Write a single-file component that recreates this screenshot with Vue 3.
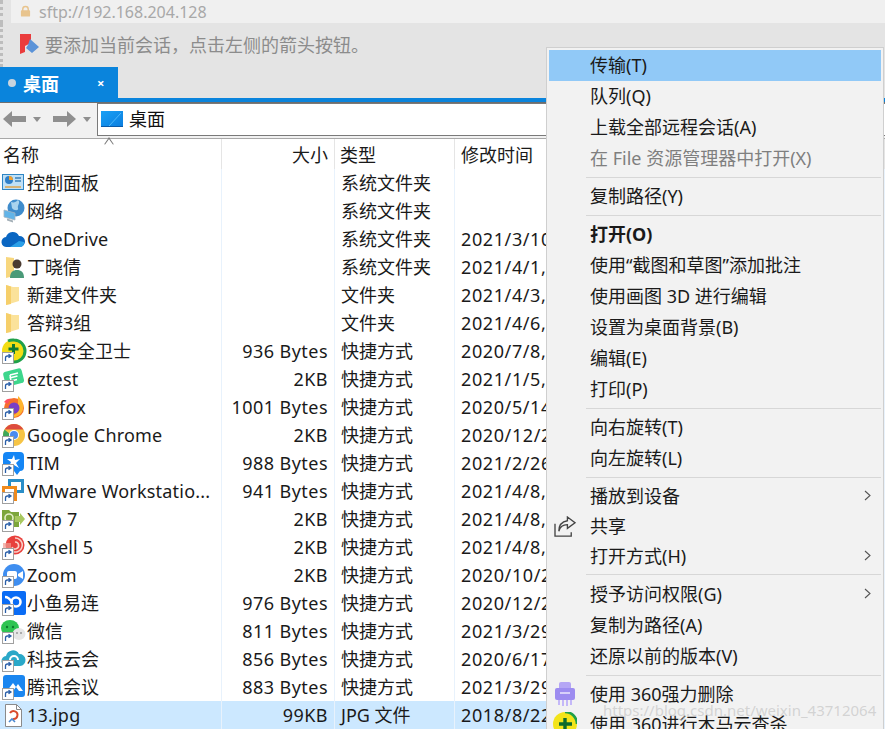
<script setup>
const rows = [
  { icon: 'panel', name: '控制面板', size: '', type: '系统文件夹', date: '' },
  { icon: 'network', name: '网络', size: '', type: '系统文件夹', date: '' },
  { icon: 'onedrive', name: 'OneDrive', size: '', type: '系统文件夹', date: '2021/3/10' },
  { icon: 'user', name: '丁晓倩', size: '', type: '系统文件夹', date: '2021/4/1,' },
  { icon: 'folder', name: '新建文件夹', size: '', type: '文件夹', date: '2021/4/3,' },
  { icon: 'folder', name: '答辩3组', size: '', type: '文件夹', date: '2021/4/6,' },
  { icon: 's360', name: '360安全卫士', size: '936 Bytes', type: '快捷方式', date: '2020/7/8,', link: true },
  { icon: 'eztest', name: 'eztest', size: '2KB', type: '快捷方式', date: '2021/1/5,', link: true },
  { icon: 'firefox', name: 'Firefox', size: '1001 Bytes', type: '快捷方式', date: '2020/5/14', link: true },
  { icon: 'chrome', name: 'Google Chrome', size: '2KB', type: '快捷方式', date: '2020/12/2', link: true },
  { icon: 'tim', name: 'TIM', size: '988 Bytes', type: '快捷方式', date: '2021/2/26', link: true },
  { icon: 'vmware', name: 'VMware Workstatio...', size: '941 Bytes', type: '快捷方式', date: '2021/4/8,', link: true },
  { icon: 'xftp', name: 'Xftp 7', size: '2KB', type: '快捷方式', date: '2021/4/8,', link: true },
  { icon: 'xshell', name: 'Xshell 5', size: '2KB', type: '快捷方式', date: '2021/4/8,', link: true },
  { icon: 'zoom', name: 'Zoom', size: '2KB', type: '快捷方式', date: '2020/10/2', link: true },
  { icon: 'fish', name: '小鱼易连', size: '976 Bytes', type: '快捷方式', date: '2020/12/2', link: true },
  { icon: 'wechat', name: '微信', size: '811 Bytes', type: '快捷方式', date: '2021/3/29', link: true },
  { icon: 'cloud', name: '科技云会', size: '856 Bytes', type: '快捷方式', date: '2020/6/17', link: true },
  { icon: 'meeting', name: '腾讯会议', size: '883 Bytes', type: '快捷方式', date: '2021/3/29', link: true },
  { icon: 'jpg', name: '13.jpg', size: '99KB', type: 'JPG 文件', date: '2018/8/22', selected: true }
]

const menu = [
  { label: '传输(T)', active: true },
  { label: '队列(Q)' },
  { label: '上载全部远程会话(A)' },
  { label: '在 File 资源管理器中打开(X)', disabled: true },
  { sep: true },
  { label: '复制路径(Y)' },
  { sep: true },
  { label: '打开(O)', bold: true },
  { label: '使用“截图和草图”添加批注' },
  { label: '使用画图 3D 进行编辑' },
  { label: '设置为桌面背景(B)' },
  { label: '编辑(E)' },
  { label: '打印(P)' },
  { sep: true },
  { label: '向右旋转(T)' },
  { label: '向左旋转(L)' },
  { sep: true },
  { label: '播放到设备', sub: true, tight: true },
  { label: '共享', icon: 'share', tight: true },
  { label: '打开方式(H)', sub: true, tight: true },
  { sep: true, wide: true },
  { label: '授予访问权限(G)', sub: true },
  { label: '复制为路径(A)' },
  { label: '还原以前的版本(V)' },
  { sep: true },
  { label: '使用 360强力删除', icon: 'shred', tight: true },
  { label: '使用 360进行木马云查杀', icon: 'scan', tight: true }
]

// latin names run a bit wider than the installed font
const isLatin = (s) => /^[\x00-\x7f]+$/.test(s) || /^\d/.test(s)
</script>

<template>
  <div class="screen">
    <div class="url-bar">
      <div class="url-inner">
        <svg class="lock" width="11" height="13" viewBox="0 0 12 13">
          <path d="M3 6V4a3 3 0 0 1 6 0v2" fill="none" stroke="#e8c48e" stroke-width="1.6" />
          <rect x="1" y="5" width="10" height="7" rx="1" fill="#e8c48e" />
        </svg>
        <span class="url-text">sftp://192.168.204.128</span>
      </div>
    </div>
    <div class="hint-bar">
      <svg width="21" height="20" viewBox="0 0 21 20">
        <path d="M1 0h11v9l-6 3v6l-5 2z" fill="#ea3c3c" />
        <path d="M11 5l9 8-7 6-6-5 2-3z" fill="#5b93d8" />
      </svg>
      <span>要添加当前会话，点击左侧的箭头按钮。</span>
    </div>
    <div class="tab-row">
      <div class="tab">
        <i class="tab-dot"></i>
        <span class="tab-name">桌面</span>
        <span class="tab-close">×</span>
      </div>
    </div>
    <div class="tab-line"></div>
    <div class="toolbar">
      <div class="nav">
        <svg width="23" height="18" viewBox="0 0 23 18"><path d="M9 1v5h14v6H9v5L0 9z" fill="#8f8f8f" /></svg>
        <i class="caret"></i>
        <svg class="nav-fwd" width="23" height="18" viewBox="0 0 23 18"><path d="M14 1v5H0v6h14v5l9-8z" fill="#8f8f8f" /></svg>
        <i class="caret"></i>
      </div>
      <div class="address">
        <svg width="22" height="17" viewBox="0 0 22 17">
          <defs>
            <linearGradient id="desk" x1="0" y1="0" x2="1" y2="1">
              <stop offset="0" stop-color="#1aa0f5" />
              <stop offset="1" stop-color="#0b7fe0" />
            </linearGradient>
          </defs>
          <rect width="22" height="15" fill="url(#desk)" />
          <path d="M8 15L20 2" stroke="#4db8fb" stroke-width="1" />
          <rect y="15" width="22" height="1" fill="#0a5aa8" />
        </svg>
        <span class="address-text">桌面</span>
      </div>
    </div>

    <div class="list-head">
      <div class="col-name">名称<i class="sort"></i></div>
      <div class="col-size">大小</div>
      <div class="col-type">类型</div>
      <div class="col-date">修改时间</div>
    </div>

    <div class="list">
      <div v-for="r in rows" :key="r.name" class="row" :class="{ selected: r.selected }">
        <div class="col-name">
          <svg class="file-icon" width="24" height="24" viewBox="0 0 24 24">
            <template v-if="r.icon === 'panel'">
              <rect x="1.5" y="3.5" width="21" height="15" fill="#bfe0f6" stroke="#2f86c4" />
              <circle cx="8" cy="9" r="4" fill="#2f7fc8" />
              <path d="M8 9V5a4 4 0 0 1 4 4z" fill="#f0a030" />
              <path d="M14 7h6M14 10h6" stroke="#3a7fb8" stroke-width="1.4" />
              <path d="M4 16h16" stroke="#e0a040" stroke-width="1.4" />
            </template>
            <template v-else-if="r.icon === 'network'">
              <circle cx="15" cy="9" r="8.5" fill="#3f8ccc" />
              <path d="M10 3c3 1 5 0 7-2 3 3-1 5 0 8s-4 3-6 0z" fill="#a9d3ee" />
              <path d="M3 11l11 3v7L3 18z" fill="#62b4e8" stroke="#a4b4c0" stroke-width=".8" />
              <path d="M6 19.5l6 2v2l-6-2z" fill="#a4b0b8" />
            </template>
            <template v-else-if="r.icon === 'onedrive'">
              <path d="M6 20a5 5 0 0 1-1-10 7 7 0 0 1 13-1 5.5 5.5 0 0 1 1 11z" fill="#0a66c2" />
              <path d="M9 20l9-6 5 1a4 4 0 0 1-4 5z" fill="#2ba0e8" />
            </template>
            <template v-else-if="r.icon === 'user'">
              <path d="M5 2l8 1v18l-8 2z" fill="#f8d77e" />
              <circle cx="16" cy="9" r="4.5" fill="#4a3a30" />
              <path d="M9 23c0-6 3-8 7-8s7 2 7 8z" fill="#4a9a78" />
            </template>
            <template v-else-if="r.icon === 'folder'">
              <path d="M5 2l7 2h6v14l-13 4z" fill="#fbe29a" />
              <path d="M5 2l5 1.5V21l-5 1z" fill="#f6cf6a" />
            </template>
            <template v-else-if="r.icon === 's360'">
              <circle cx="12.5" cy="12" r="11.5" fill="#f3dd14" />
              <path d="M7 2a11 11 0 0 1 6-1 11 11 0 0 1 0 22" fill="none" stroke="#1fa04a" stroke-width="3" />
              <path d="M12.5 5v10M7.5 10h10" stroke="#0e7a34" stroke-width="3" />
            </template>
            <template v-else-if="r.icon === 'eztest'">
              <rect x="3" y="3" width="19" height="15" rx="3" transform="rotate(-14 12 10)" fill="#3dd68c" />
              <path d="M9 8l8-2M8.5 11l8-2M9 8l1 6 6-1.5" fill="none" stroke="#fff" stroke-width="1.5" />
            </template>
            <template v-else-if="r.icon === 'firefox'">
              <circle cx="13" cy="13" r="10" fill="#f5702a" />
              <path d="M17 1c5 4 7 11 4 16-3 5-9 6-13 4 7 0 10-5 9-10z" fill="#ffb52e" />
              <circle cx="13" cy="13" r="5.5" fill="#7a3fc4" />
              <path d="M3 7c2-3 5-4 7-3-1 2-3 3-3 5z" fill="#ff4f5e" />
            </template>
            <template v-else-if="r.icon === 'chrome'">
              <circle cx="13" cy="12" r="11" fill="#f6c445" />
              <path d="M3.5 6.5A11 11 0 0 1 22.5 6.5H13z" fill="#dd4b3e" />
              <path d="M3.5 6.5A11 11 0 0 0 10 22.5l4-7z" fill="#3da85a" />
              <circle cx="13" cy="12" r="5" fill="#fff" />
              <circle cx="13" cy="12" r="4" fill="#4a8af0" />
            </template>
            <template v-else-if="r.icon === 'tim'">
              <path d="M6 1h13a4 4 0 0 1 4 4v11a4 4 0 0 1-4 4l-3 4-3-4H6a4 4 0 0 1-4-4V5a4 4 0 0 1 4-4z" fill="#1486f5" />
              <path d="M13 4l1 5 5-1-4 4 3 5-5-3-5 2 2-5-4-3 5 0z" fill="#fff" />
            </template>
            <template v-else-if="r.icon === 'vmware'">
              <rect x="7" y="0" width="16" height="14" fill="#2a8ec8" />
              <rect x="10" y="3" width="10" height="8" fill="#fff" />
              <rect x="1" y="7" width="15" height="15" fill="#f08a1c" />
              <rect x="4" y="10" width="9" height="9" fill="#fff" />
            </template>
            <template v-else-if="r.icon === 'xftp'">
              <path d="M1 3h7l2 2h8v15H1z" fill="#7da63c" />
              <path d="M14 9h5v-3l5 6-5 6v-3h-5z" fill="#a8c860" />
              <circle cx="8" cy="11" r="4" fill="none" stroke="#e4efc8" stroke-width="1.6" />
            </template>
            <template v-else-if="r.icon === 'xshell'">
              <circle cx="14" cy="10" r="9.5" fill="#e8403c" />
              <path d="M14 3a7 7 0 1 1-6 10M14 7a3.5 3.5 0 1 1-3 5" fill="none" stroke="#f8d0c8" stroke-width="1.6" />
              <path d="M2 8h8v8H2z" fill="#f09a90" opacity=".7" />
            </template>
            <template v-else-if="r.icon === 'zoom'">
              <circle cx="13" cy="12" r="11" fill="#3f8ef0" />
              <rect x="6" y="8" width="10" height="8" rx="2" fill="#fff" />
              <path d="M17 11l5-3v8l-5-3z" fill="#fff" />
            </template>
            <template v-else-if="r.icon === 'fish'">
              <rect x="1" y="0" width="24" height="24" rx="2" fill="#0a6cf5" />
              <circle cx="15" cy="11" r="4.5" fill="none" stroke="#fff" stroke-width="2.6" />
              <path d="M4 6c3 0 5 2 7 5" fill="none" stroke="#fff" stroke-width="2.6" />
            </template>
            <template v-else-if="r.icon === 'wechat'">
              <ellipse cx="9" cy="9" rx="9" ry="8" fill="#2fc452" />
              <circle cx="6" cy="8" r="1.2" fill="#0e7a2e" />
              <circle cx="12" cy="8" r="1.2" fill="#0e7a2e" />
              <ellipse cx="18" cy="15" rx="6.5" ry="6" fill="#e6e6e6" />
              <circle cx="16" cy="14" r="1" fill="#999" />
              <circle cx="20" cy="14" r="1" fill="#999" />
            </template>
            <template v-else-if="r.icon === 'cloud'">
              <path d="M6 19a5 5 0 0 1-1-10 7 7 0 0 1 13-2 6 6 0 0 1 1 12z" fill="#2ba8c8" />
              <path d="M9 13a4 4 0 0 1 8 0" fill="none" stroke="#fff" stroke-width="2" />
            </template>
            <template v-else-if="r.icon === 'meeting'">
              <rect x="2" y="0" width="22" height="22" rx="3" fill="#1a86f0" />
              <path d="M6 16l6-8 3 4 2-3 5 7h-4l-3-4-3 4z" fill="#fff" />
            </template>
            <template v-else-if="r.icon === 'jpg'">
              <path d="M4.5 1.5h11l5 5v17h-16z" fill="#fff" stroke="#8a8a8a" />
              <path d="M15.5 1.5v5h5" fill="none" stroke="#8a8a8a" />
              <path d="M9 10a4 4 0 1 1 3 6" fill="none" stroke="#d8492c" stroke-width="2" />
              <path d="M8 19l3-3 3 3" fill="none" stroke="#4a88d0" stroke-width="1.6" />
            </template>
            <g v-if="r.link">
              <rect x="1.5" y="13.5" width="11" height="11" fill="#fff" stroke="#a0a0a0" />
              <path d="M4.5 22v-3a2 2 0 0 1 2-2H9M7.5 15.2L10 17l-2.5 1.8" fill="none" stroke="#2a5fa8" stroke-width="1.3" />
            </g>
          </svg>
          <span class="name" :class="{ latin: isLatin(r.name) }">{{ r.name }}</span>
        </div>
        <div class="col-size">{{ r.size }}</div>
        <div class="col-type">{{ r.type }}</div>
        <div class="col-date">{{ r.date }}</div>
      </div>
    </div>

    <div class="menu">
      <template v-for="(m, i) in menu" :key="i">
        <div v-if="m.sep" class="menu-sep" :class="{ wide: m.wide }"></div>
        <div
          v-else
          class="menu-item"
          :class="{ active: m.active, disabled: m.disabled, bold: m.bold, tight: m.tight }"
        >
          <span class="menu-icon">
            <svg v-if="m.icon === 'share'" class="share" width="23" height="21" viewBox="0 0 24 22">
              <path d="M1 8v13h17v-4" fill="none" stroke="#444" stroke-width="1.4" />
              <path d="M14 1l8 6-8 6V9C9 9 6 12 5 16c0-6 3-10 9-11z" fill="none" stroke="#444" stroke-width="1.4" />
            </svg>
            <svg v-else-if="m.icon === 'shred'" width="22" height="24" viewBox="0 0 22 24">
              <rect x="5" y="0" width="12" height="9" rx="2" fill="#b5a6f5" />
              <rect x="1" y="6" width="20" height="12" rx="2" fill="#9d8cf0" />
              <rect x="6" y="10" width="10" height="2" fill="#d8d0fa" />
              <path d="M5 18v5M9 18v6M13 18v6M17 18v5" stroke="#c4b8f8" stroke-width="2" />
            </svg>
            <svg v-else-if="m.icon === 'scan'" width="24" height="24" viewBox="0 0 24 24">
              <circle cx="12" cy="12" r="12" fill="#f3e41a" />
              <path d="M12 0a12 12 0 0 1 12 12" fill="none" stroke="#1fa04a" stroke-width="2.6" />
              <path d="M12 6v13M6 12h13" stroke="#0e6a2c" stroke-width="3.4" />
            </svg>
          </span>
          <span class="menu-label">{{ m.label }}</span>
          <svg v-if="m.sub" class="chev" width="7" height="11" viewBox="0 0 7 11">
            <path d="M1 1l5 4.5L1 10" fill="none" stroke="#555" stroke-width="1.1" />
          </svg>
        </div>
      </template>
    </div>

    <div class="watermark">https://blog.csdn.net/weixin_43712064</div>
  </div>
</template>

<style scoped>
.screen {
  position: relative;
  width: 885px;
  height: 729px;
  overflow: hidden;
  background: #e4e4e4;
  font-family: "Noto Sans", "Noto Sans CJK SC", sans-serif;
  font-size: 18px;
  color: #1a1a1a;
}

.url-bar {
  height: 24px;
  padding-left: 11px;
  box-sizing: border-box;
  position: relative;
}

.url-bar::before,
.hint-bar::before {
  content: "";
  position: absolute;
  left: 0;
  top: 0;
  bottom: 0;
  border-left: 3px dotted #bdbdbd;
}

.url-inner {
  height: 23px;
  background: #f0f0f0;
  display: flex;
  align-items: center;
  padding-left: 9px;
  gap: 8px;
}

.url-text {
  font-size: 16px;
  color: #a8a8a8;
}

.hint-bar {
  position: relative;
  height: 43px;
  display: flex;
  align-items: center;
  padding-left: 19px;
  gap: 5px;
  color: #8c8c8c;
  box-sizing: border-box;
  padding-bottom: 3px;
}

.tab-row {
  height: 31px;
}

.tab {
  width: 118px;
  height: 31px;
  background: #0a84dc;
  color: #fff;
  display: flex;
  align-items: center;
  box-sizing: border-box;
  padding-left: 8px;
}

.tab-dot {
  width: 8px;
  height: 8px;
  border-radius: 50%;
  background: #c8d4de;
}

.tab-name {
  margin-left: 7px;
  font-weight: 700;
}

.tab-close {
  margin-left: 38px;
  font-size: 13px;
  font-weight: 700;
}

.tab-line {
  height: 4px;
  background: #0a84dc;
  border-bottom: 1px solid #6e6e6e;
}

.toolbar {
  height: 35px;
  display: flex;
  align-items: flex-start;
  background: #f1f1f1;
  border-bottom: 1px solid #a8a8a8;
  overflow: hidden;
}

.nav {
  flex: none;
  width: 97px;
  height: 32px;
  display: flex;
  align-items: center;
  padding-left: 3px;
  box-sizing: border-box;
}

.nav-fwd {
  margin-left: 12px;
}

.caret {
  width: 0;
  height: 0;
  margin-left: 7px;
  border-left: 4px solid transparent;
  border-right: 4px solid transparent;
  border-top: 5px solid #8f8f8f;
}

.address {
  flex: none;
  width: 800px;
  height: 33px;
  background: #fff;
  border: 1px solid #7a7a7a;
  box-sizing: border-box;
  display: flex;
  align-items: center;
  padding-left: 3px;
  padding-bottom: 1px;
  gap: 6px;
  color: #111;
}

.address-text {
  position: relative;
  top: -1px;
}

.list-head,
.row {
  display: grid;
  grid-template-columns: 222px 113px 120px 1fr;
  background: #fff;
}

.list-head {
  height: 30px;
  line-height: 32px;
}

.list-head > div {
  border-right: 1px solid #e5e5e5;
}

.row {
  height: 28px;
  line-height: 28px;
}

.row > div {
  border-right: 1px solid #e8f2fc;
}

.row.selected {
  background: #cce8ff;
}

.col-name {
  position: relative;
  display: flex;
  align-items: center;
  min-width: 0;
  padding-left: 1px;
}

.list-head .col-name {
  padding-left: 3px;
}

.col-size {
  text-align: right;
  padding-right: 6px;
}

.row .col-size {
  letter-spacing: 0.45px;
}

.col-type {
  padding-left: 5px;
  white-space: nowrap;
}

.row .col-type {
  padding-left: 6px;
}

.col-date {
  padding-left: 6px;
  white-space: nowrap;
}

.row .col-date {
  letter-spacing: 0.6px;
}

.sort {
  position: absolute;
  left: 105px;
  top: 1px;
  width: 7px;
  height: 7px;
  border-left: 1px solid #777;
  border-top: 1px solid #777;
  transform: rotate(45deg) skew(10deg, 10deg);
}

.file-icon {
  flex: none;
  overflow: visible;
}

.name {
  margin-left: 2px;
  white-space: nowrap;
}

.name.latin {
  letter-spacing: 0.2px;
}

.menu {
  position: absolute;
  left: 546px;
  top: 47px;
  width: 338px;
  box-sizing: border-box;
  padding: 2px;
  background: #f2f2f2;
  border: 1px solid #cfcfcf;
}

.menu-item {
  position: relative;
  height: 31px;
  line-height: 31px;
  display: flex;
  padding-left: 41px;
  white-space: nowrap;
}

.menu-item.tight {
  height: 30px;
  line-height: 30px;
}

.menu-item.active {
  background: #91c9f7;
}

.menu-item.disabled {
  color: #7f7f7f;
}

.menu-item.bold {
  font-weight: 700;
}

.menu-icon {
  position: absolute;
  left: 3px;
  top: 3px;
  width: 26px;
  display: flex;
  justify-content: center;
}

.share {
  margin-top: 2px;
}

.chev {
  position: absolute;
  right: 10px;
  top: 9px;
}

.menu-sep {
  height: 1px;
  margin: 3px 0 3px 37px;
  background: #d7d7d7;
}

.menu-sep.wide {
  margin-bottom: 4px;
}

.watermark {
  position: absolute;
  left: 603px;
  top: 700px;
  font-size: 15px;
  color: rgba(190, 190, 190, 0.6);
  white-space: nowrap;
}
</style>
